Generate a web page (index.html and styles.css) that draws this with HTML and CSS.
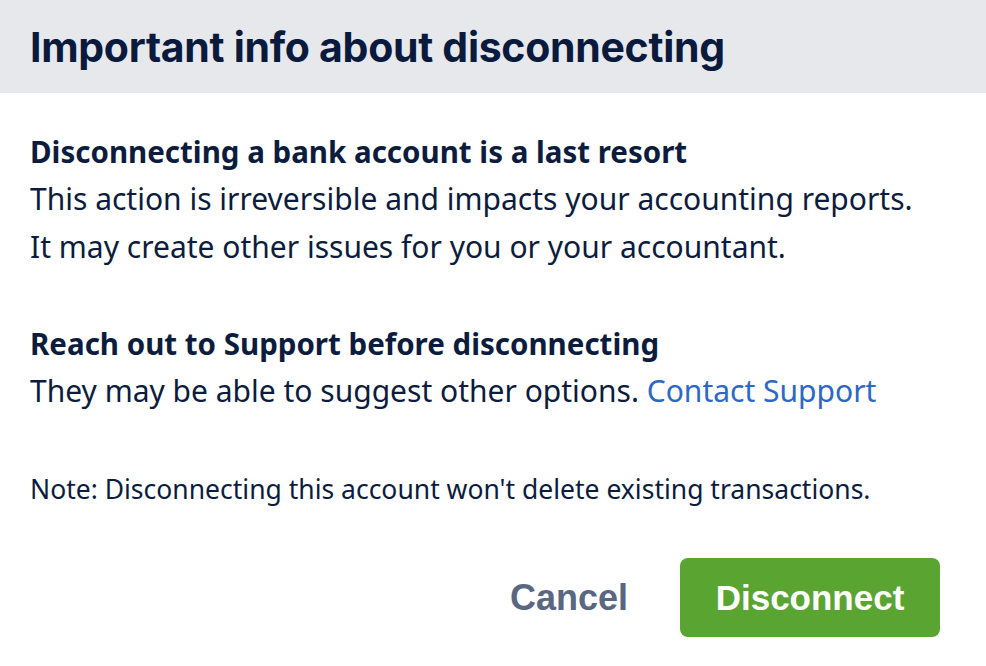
FILE: index.html
```html
<!DOCTYPE html>
<html lang="en">
<head>
    <meta charset="UTF-8">
    <meta name="viewport" content="width=device-width, initial-scale=1.0">
    <title>Disconnect account</title>
    <link rel="stylesheet" href="styles.css">
</head>
<body>
    <div class="dialog">
        <div class="dialog-header">
            <h1>Important info about disconnecting</h1>
        </div>

        <div class="dialog-body">
            <section class="info-block">
                <h2>Disconnecting a bank account is a last resort</h2>
                <p>This action is irreversible and impacts your accounting reports.<br>
                It may create other issues for you or your accountant.</p>
            </section>

            <section class="info-block">
                <h2>Reach out to Support before disconnecting</h2>
                <p>They may be able to suggest other options. <a href="#" class="link">Contact Support</a></p>
            </section>

            <p class="note">Note: Disconnecting this account won't delete existing transactions.</p>
        </div>

        <div class="dialog-footer">
            <button type="button" class="btn-cancel">Cancel</button>
            <button type="button" class="btn-primary">Disconnect</button>
        </div>
    </div>
</body>
</html>
```

FILE: styles.css
```css
body {
    margin: 0;
    background-color: #fff;
    font-family: 'Noto Sans', 'Open Sans', sans-serif;
    color: #0c1c3d;
}

.dialog {
    width: 986px;
    height: 666px;
    display: flex;
    flex-direction: column;
}

.dialog-header {
    background-color: #e7e8ec;
    height: 93px;
    display: flex;
    align-items: center;
    padding: 0 30px;
    box-sizing: border-box;
}

h1 {
    margin: 0;
    font-family: Inter, 'Liberation Sans', sans-serif;
    font-size: 41px;
    font-weight: 700;
    letter-spacing: -0.3px;
    color: #0a1a3c;
}

.dialog-body {
    padding: 36px 30px 0;
}

.info-block {
    margin-bottom: 50px;
}

h2 {
    margin: 0;
    font-size: 29.5px;
    font-weight: 700;
    line-height: 46px;
}

.info-block p {
    margin: 0;
    font-size: 30px;
    line-height: 48px;
}

.link {
    color: #2c68c4;
    text-decoration: none;
}

.note {
    margin: 59px 0 0;
    font-size: 26.5px;
    line-height: 30px;
}

.dialog-footer {
    display: flex;
    justify-content: flex-end;
    align-items: center;
    gap: 52px;
    padding: 54px 46px 0 0;
}

button {
    font-family: 'Liberation Sans', Arial, sans-serif;
    font-weight: 700;
    border: none;
    cursor: pointer;
}

.btn-cancel {
    background: none;
    color: #5a6781;
    font-size: 36px;
    padding: 0;
}

.btn-primary {
    background-color: #5aa532;
    color: #fff;
    font-size: 35px;
    width: 260px;
    height: 79px;
    border-radius: 8px;
}
```
